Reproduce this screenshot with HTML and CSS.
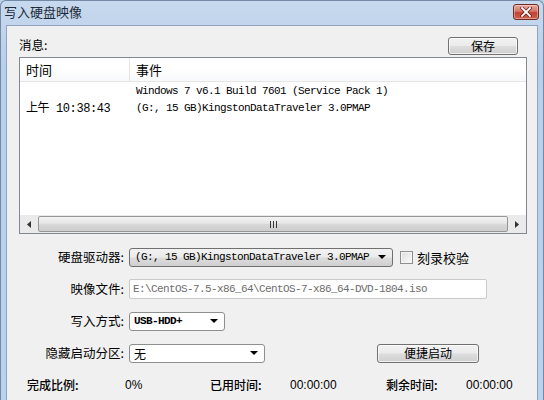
FILE: index.html
```html
<!DOCTYPE html>
<html lang="zh-CN">
<head>
  <meta charset="UTF-8">
  <title>写入硬盘映像</title>
  <link rel="stylesheet" href="styles.css">
</head>
<body>

<div class="window">
  <div class="titlebar">
    <span class="title">写入硬盘映像</span>
    <button class="close">
      <svg width="12" height="10" viewBox="0 0 12 10">
        <path d="M2 1 L10 9 M10 1 L2 9" stroke="#5a1f1a" stroke-width="3.2" stroke-linecap="square"/>
        <path d="M2 1 L10 9 M10 1 L2 9" stroke="#fff" stroke-width="1.8" stroke-linecap="square"/>
      </svg>
    </button>
  </div>

  <div class="client">
    <div class="top-row">
      <span class="label">消息:</span>
      <button class="btn save">保存</button>
    </div>

    <div class="listview">
      <div class="lv-header">
        <div class="col col-time">时间</div>
        <div class="col col-event">事件</div>
      </div>
      <div class="lv-body">
        <div class="lv-item">
          <div class="cell-time">上午 10:38:43</div>
          <div class="cell-event">
            <div>Windows 7 v6.1 Build 7601 (Service Pack 1)</div>
            <div>(G:, 15 GB)KingstonDataTraveler 3.0PMAP</div>
          </div>
        </div>
      </div>
      <div class="hscroll">
        <div class="sb-arrow">
          <svg width="4" height="7" viewBox="0 0 4 7"><path d="M4 0 L0 3.5 L4 7 Z" fill="#333"/></svg>
        </div>
        <div class="sb-thumb"><span class="grip"></span></div>
        <div class="sb-arrow">
          <svg width="4" height="7" viewBox="0 0 4 7"><path d="M0 0 L4 3.5 L0 7 Z" fill="#333"/></svg>
        </div>
      </div>
    </div>

    <div class="form">
      <label class="flabel">硬盘驱动器:</label>
      <div class="fctl">
        <div class="combo combo-btn drive">
          <span class="mono">(G:, 15 GB)KingstonDataTraveler 3.0PMAP</span>
          <span class="arrow"></span>
        </div>
        <span class="check"></span>
        <span class="check-label">刻录校验</span>
      </div>

      <label class="flabel">映像文件:</label>
      <div class="fctl">
        <div class="textbox mono">E:\CentOS-7.5-x86_64\CentOS-7-x86_64-DVD-1804.iso</div>
      </div>

      <label class="flabel">写入方式:</label>
      <div class="fctl">
        <div class="combo mode">
          <span class="mono bold">USB-HDD+</span>
          <span class="arrow"></span>
        </div>
      </div>

      <label class="flabel">隐藏启动分区:</label>
      <div class="fctl">
        <div class="combo hide">
          <span>无</span>
          <span class="arrow"></span>
        </div>
        <button class="btn quick">便捷启动</button>
      </div>
    </div>

    <div class="status">
      <span class="st st-l1">完成比例:</span>
      <span class="st st-v1 num">0%</span>
      <span class="st st-l2">已用时间:</span>
      <span class="st st-v2 num">00:00:00</span>
      <span class="st st-l3">剩余时间:</span>
      <span class="st num">00:00:00</span>
    </div>
  </div>
</div>

</body>
</html>
```

FILE: styles.css
```css
* {
  box-sizing: border-box;
}

body {
  margin: 0;
  font-family: "Noto Sans CJK SC", "Liberation Sans", sans-serif;
  font-size: 12px;
  color: #000;
  background: #bcd1ea;
}

.window {
  width: 544px;
  height: 400px;
  overflow: hidden;
  background: linear-gradient(#c7d9ee, #bacfe9 60px, #bcd1ea);
  border: 1px solid #7489a5;
  border-bottom: none;
  border-radius: 6px 6px 0 0;
  padding: 0 5px 0 5px;
}

.titlebar {
  height: 24px;
  display: flex;
  align-items: center;
  justify-content: space-between;
  margin-left: -2px;
  margin-right: -1px;
}

.title {
  font-size: 13px;
  color: #1e2a3a;
  line-height: 1;
  margin-top: -3px;
}

.close {
  width: 26px;
  height: 16px;
  margin-top: -2px;
  padding: 0;
  display: flex;
  align-items: center;
  justify-content: center;
  border: 1px solid #6e2c25;
  border-radius: 3px;
  background: linear-gradient(#e9a99d, #d47566 45%, #c1412f 55%, #d0624c);
  box-shadow: inset 0 0 0 1px rgba(255, 255, 255, 0.35);
}

.client {
  height: 376px;
  background: #f0f0f0;
  border: 1px solid #8ea3bf;
  border-bottom: none;
  padding: 0 10px 0 12px;
}

.top-row {
  margin-top: 10px;
  height: 19px;
  display: flex;
  align-items: center;
  justify-content: space-between;
}

.label {
  line-height: 1;
  font-size: 12.5px;
}

.btn {
  font-family: "Noto Sans CJK SC", sans-serif;
  font-size: 12px;
  color: #000;
  border: 1px solid #707070;
  border-radius: 3px;
  background: linear-gradient(#f2f2f2, #ebebeb 48%, #dddddd 52%, #cfcfcf);
  box-shadow: inset 0 0 0 1px rgba(255, 255, 255, 0.7);
  padding: 0;
  line-height: 1;
}

.save {
  width: 70px;
  height: 18px;
  margin-right: 9px;
}

.listview {
  margin-top: 2px;
  height: 177px;
  background: #fff;
  border: 1px solid #828790;
  display: flex;
  flex-direction: column;
}

.lv-header {
  height: 24px;
  display: flex;
  border-bottom: 1px solid #e5e5e5;
  background: linear-gradient(#fff, #fff 50%, #f7f8fa);
}

.col {
  font-size: 13px;
  display: flex;
  align-items: center;
  padding-left: 6px;
}

.col-time {
  width: 110px;
  border-right: 1px solid #e5e5e5;
}

.mono,
.cell-time,
.cell-event {
  font-family: "Liberation Mono", "Noto Sans CJK SC", monospace;
  font-size: 11px;
  letter-spacing: -0.6px;
}

.lv-body {
  flex: 1;
}

.lv-item {
  display: flex;
  padding-top: 1px;
}

.cell-time {
  width: 110px;
  padding-left: 6px;
  padding-top: 15px;
  font-size: 12px;
  letter-spacing: -0.4px;
}

.cell-event {
  padding-left: 6px;
  line-height: 17px;
}

.hscroll {
  height: 18px;
  display: flex;
  align-items: stretch;
  background: #eaeaea;
  padding: 1px 0;
}

.sb-arrow {
  width: 18px;
  display: flex;
  align-items: center;
  justify-content: center;
}

.sb-thumb {
  flex: 1;
  border: 1px solid #979797;
  border-radius: 2px;
  background: linear-gradient(#f3f3f3, #e6e6e6 45%, #d6d6d6 55%, #cdcdcd);
  display: flex;
  align-items: center;
  justify-content: center;
}

.grip {
  width: 7px;
  height: 7px;
  background: repeating-linear-gradient(90deg, #3a3a3a 0 1px, transparent 1px 3px);
}

.form {
  margin-top: 7px;
  display: grid;
  grid-template-columns: 105px 1fr;
  grid-auto-rows: 32px;
  column-gap: 5px;
  align-items: center;
}

.flabel {
  justify-self: end;
  line-height: 1;
  font-size: 12.5px;
}

.fctl {
  display: flex;
  align-items: center;
}

.combo {
  height: 19px;
  display: flex;
  align-items: center;
  justify-content: space-between;
  padding: 0 6px 0 4px;
  border: 1px solid #8e8f8f;
  border-radius: 3px;
  background: #fff;
}

.combo-btn {
  border-color: #707070;
  background: linear-gradient(#f2f2f2, #ebebeb 48%, #dddddd 52%, #cfcfcf);
}

.arrow {
  width: 0;
  height: 0;
  border-left: 4px solid transparent;
  border-right: 4px solid transparent;
  border-top: 4px solid #000;
}

.drive {
  width: 264px;
  padding-left: 5px;
}

.bold {
  font-weight: bold;
}

.check {
  width: 13px;
  height: 13px;
  margin-left: 7px;
  border: 1px solid #8f8f8f;
  background: linear-gradient(135deg, #dcdcdc, #fbfbfb);
  box-shadow: inset 0 0 0 1px #f4f4f4;
}

.check-label {
  margin-left: 4px;
  font-size: 13px;
}

.textbox {
  width: 358px;
  height: 20px;
  display: flex;
  align-items: center;
  padding-left: 3px;
  border: 1px solid #c8c9ca;
  border-radius: 2px;
  background: #fff;
  color: #6d6d6d;
}

.mode {
  width: 96px;
}

.hide {
  width: 136px;
}

.quick {
  width: 102px;
  height: 19px;
  margin-left: 112px;
}

.status {
  height: 32px;
  display: flex;
  align-items: center;
  padding-left: 8px;
}

.st {
  line-height: 1;
  font-weight: 500;
}

.num {
  font-family: "Liberation Sans", sans-serif;
  font-size: 12px;
  font-weight: normal;
}

.st-l1 { width: 98px; }
.st-v1 { width: 85px; }
.st-l2 { width: 80px; }
.st-v2 { width: 96px; }
.st-l3 { width: 80px; }
```
